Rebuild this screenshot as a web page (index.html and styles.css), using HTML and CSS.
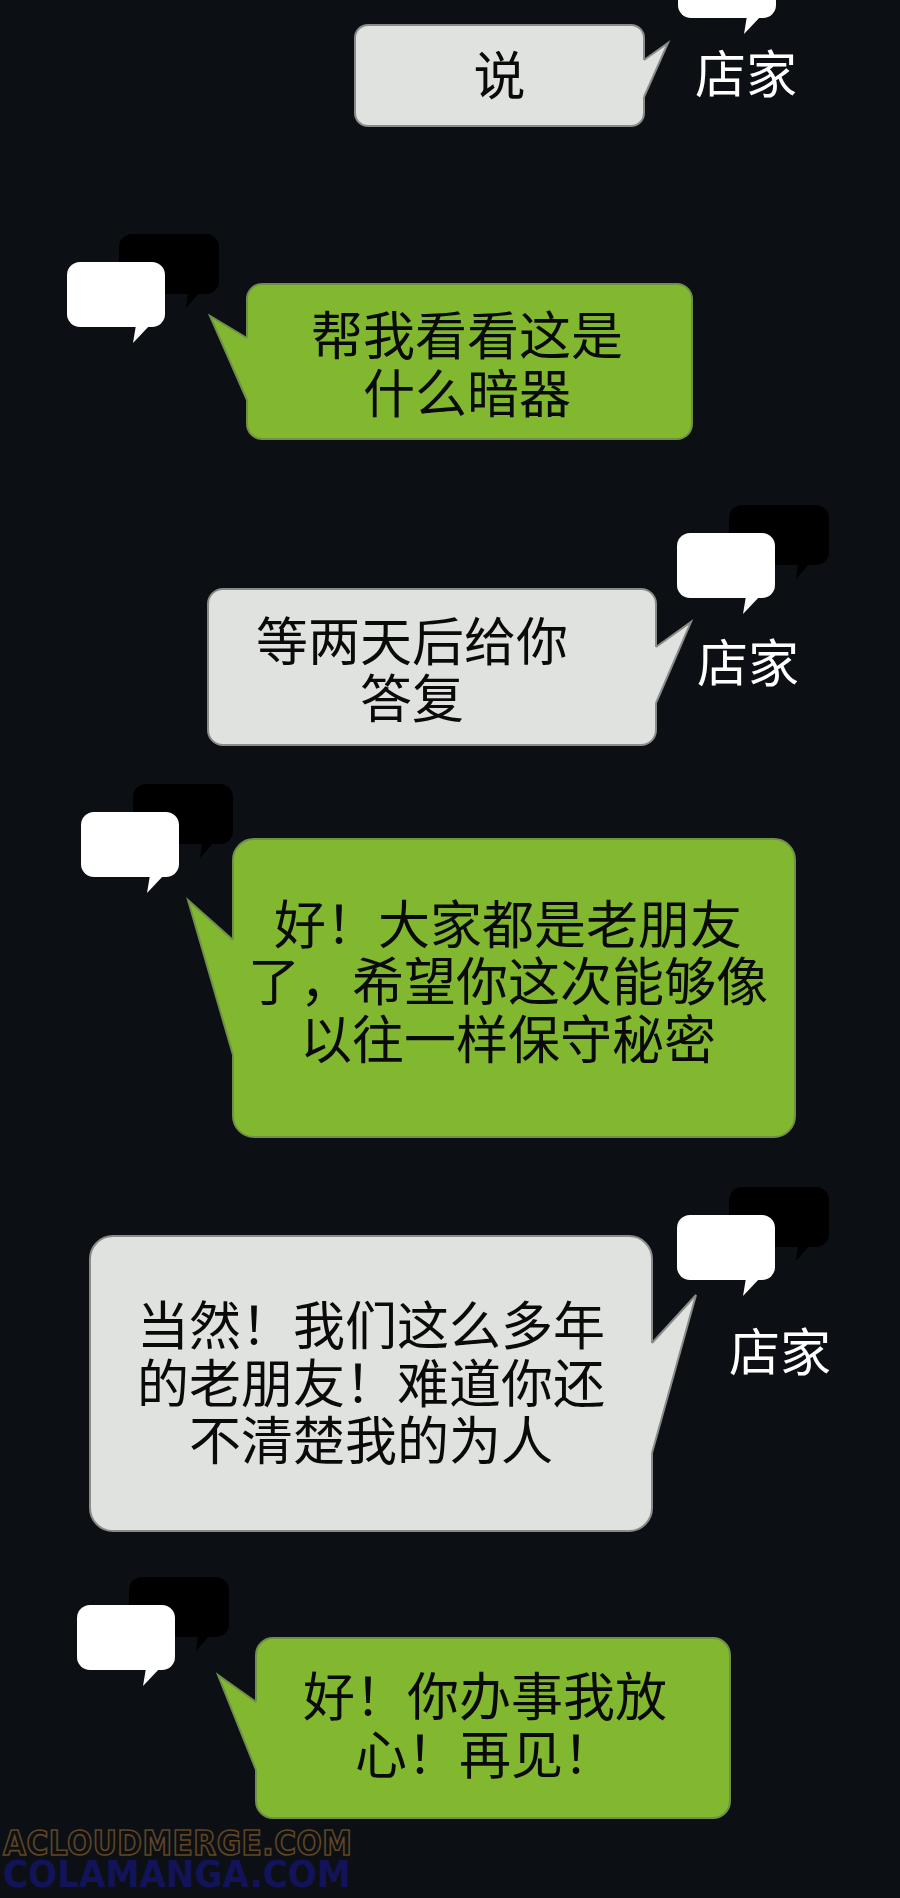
FILE: index.html
```html
<!DOCTYPE html>
<html lang="zh-CN">
<head>
<meta charset="utf-8">
<title>对话</title>
<link rel="stylesheet" href="styles.css">
</head>
<body>
<div class="page">

  <section class="row row-a">
    <div class="bubble gray b-a">
      <span class="txt">说</span>
      <svg class="tail" viewBox="0 0 1 1"><polygon class="f" points="290,36 314,19 290,73 286,73 286,36"/><polyline class="s" points="290,36 314,19 290,73"/></svg>
    </div>
    <div class="speaker sp-a">
      <svg class="avatar" viewBox="0 0 154 111"><rect class="bk" x="53" y="1" width="100" height="60" rx="13"/><polygon class="bk" points="122,59 134,59 120,75"/><rect class="wh" x="1" y="29" width="98" height="65" rx="13"/><polygon class="wh" points="70,92 84,92 67,110"/></svg>
      <div class="name">店家</div>
    </div>
  </section>

  <section class="row row-b">
    <svg class="avatar av-b" viewBox="0 0 154 111"><rect class="bk" x="53" y="1" width="100" height="60" rx="13"/><polygon class="bk" points="122,59 134,59 120,75"/><rect class="wh" x="1" y="29" width="98" height="65" rx="13"/><polygon class="wh" points="70,92 84,92 67,110"/></svg>
    <div class="bubble green b-b">
      <span class="txt">帮我看看这是<br>什么暗器</span>
      <svg class="tail" viewBox="0 0 1 1"><polygon class="f" points="1,55 -36,33 1,117 5,117 5,55"/><polyline class="s" points="1,55 -36,33 1,117"/></svg>
    </div>
  </section>

  <section class="row row-c">
    <div class="bubble gray b-c">
      <span class="txt">等两天后给你<br>答复</span>
      <svg class="tail" viewBox="0 0 1 1"><polygon class="f" points="449,59 484,34 449,115 445,115 445,59"/><polyline class="s" points="449,59 484,34 449,115"/></svg>
    </div>
    <div class="speaker sp-c">
      <svg class="avatar" viewBox="0 0 154 111"><rect class="bk" x="53" y="1" width="100" height="60" rx="13"/><polygon class="bk" points="122,59 134,59 120,75"/><rect class="wh" x="1" y="29" width="98" height="65" rx="13"/><polygon class="wh" points="70,92 84,92 67,110"/></svg>
      <div class="name">店家</div>
    </div>
  </section>

  <section class="row row-d">
    <svg class="avatar av-d" viewBox="0 0 154 111"><rect class="bk" x="53" y="1" width="100" height="60" rx="13"/><polygon class="bk" points="122,59 134,59 120,75"/><rect class="wh" x="1" y="29" width="98" height="65" rx="13"/><polygon class="wh" points="70,92 84,92 67,110"/></svg>
    <div class="bubble green b-d">
      <span class="txt">好！大家都是老朋友<br>了，希望你这次能够像<br>以往一样保守秘密</span>
      <svg class="tail" viewBox="0 0 1 1"><polygon class="f" points="1,102 -44,62 1,217 5,217 5,102"/><polyline class="s" points="1,102 -44,62 1,217"/></svg>
    </div>
  </section>

  <section class="row row-e">
    <div class="bubble gray b-e">
      <span class="txt">当然！我们这么多年<br>的老朋友！难道你还<br>不清楚我的为人</span>
      <svg class="tail" viewBox="0 0 1 1"><polygon class="f" points="563,108 607,60 563,218 559,218 559,108"/><polyline class="s" points="563,108 607,60 563,218"/></svg>
    </div>
    <div class="speaker sp-e">
      <svg class="avatar" viewBox="0 0 154 111"><rect class="bk" x="53" y="1" width="100" height="60" rx="13"/><polygon class="bk" points="122,59 134,59 120,75"/><rect class="wh" x="1" y="29" width="98" height="65" rx="13"/><polygon class="wh" points="70,92 84,92 67,110"/></svg>
      <div class="name">店家</div>
    </div>
  </section>

  <section class="row row-f">
    <svg class="avatar av-f" viewBox="0 0 154 111"><rect class="bk" x="53" y="1" width="100" height="60" rx="13"/><polygon class="bk" points="122,59 134,59 120,75"/><rect class="wh" x="1" y="29" width="98" height="65" rx="13"/><polygon class="wh" points="70,92 84,92 67,110"/></svg>
    <div class="bubble green b-f">
      <span class="txt">好！你办事我放<br>心！再见！</span>
      <svg class="tail" viewBox="0 0 1 1"><polygon class="f" points="1,65 -37,38 1,133 5,133 5,65"/><polyline class="s" points="1,65 -37,38 1,133"/></svg>
    </div>
  </section>

  <footer class="watermark">
    <div class="wm1">ACLOUDMERGE.COM</div>
    <div class="wm2">COLAMANGA.COM</div>
  </footer>

</div>
</body>
</html>
```

FILE: styles.css
```css
html, body {
  margin: 0;
  padding: 0;
  background: #0c1015;
}

.page {
  width: 900px;
  height: 1898px;
  overflow: hidden;
  display: flex;
  flex-direction: column;
  background: #0c1015;
  font-family: "Noto Sans CJK SC", "Noto Sans", sans-serif;
}

.row {
  display: flex;
  align-items: flex-start;
  flex: none;
}

.row-a { height: 220px; }
.row-b { height: 270px; }
.row-c { height: 280px; }
.row-d { height: 400px; }
.row-e { height: 390px; }
.row-f { height: 265px; }

/* speech bubbles */
.bubble {
  position: relative;
  box-sizing: border-box;
  flex: none;
  border: 2px solid;
  display: flex;
  align-items: center;
  justify-content: center;
  text-align: center;
  white-space: nowrap;
  font-size: 52px;
  line-height: 57.5px;
  color: #0a0a0a;
}

.gray {
  background: #e0e2df;
  border-color: #8a8c89;
}

.green {
  background: #82b82f;
  border-color: #708f49;
}

.tail {
  position: absolute;
  left: -2px;
  top: -2px;
  width: 1px;
  height: 1px;
  overflow: visible;
}

.tail .s {
  fill: none;
  stroke-width: 2;
  stroke-linejoin: miter;
}

.gray .tail .f { fill: #e0e2df; }
.gray .tail .s { stroke: #8a8c89; }
.green .tail .f { fill: #82b82f; }
.green .tail .s { stroke: #708f49; }

.b-a {
  width: 291px;
  height: 103px;
  margin-left: 354px;
  margin-top: 24px;
  border-radius: 14px;
  padding-bottom: 6px;
}

.b-b {
  width: 447px;
  height: 157px;
  margin-left: 26px;
  margin-top: 63px;
  border-radius: 16px;
  padding-right: 5px;
}

.b-c {
  width: 450px;
  height: 158px;
  margin-left: 207px;
  margin-top: 98px;
  border-radius: 16px;
  padding-right: 40px;
}

.b-d {
  width: 564px;
  height: 300px;
  margin-left: -2px;
  margin-top: 68px;
  border-radius: 22px;
  padding-right: 12px;
  padding-bottom: 18px;
}

.b-e {
  width: 564px;
  height: 297px;
  margin-left: 89px;
  margin-top: 65px;
  border-radius: 24px;
  padding-bottom: 6px;
}

.b-f {
  width: 476px;
  height: 182px;
  margin-left: 25px;
  margin-top: 77px;
  border-radius: 18px;
  padding-right: 16px;
  padding-bottom: 11px;
}

/* avatar icon: two overlapping speech bubbles */
.avatar {
  display: block;
  flex: none;
  width: 154px;
  height: 111px;
}

.avatar .bk { fill: #000000; }
.avatar .wh { fill: #ffffff; }

.av-b { margin-left: 66px; margin-top: 13px; }
.av-d { margin-left: 80px; margin-top: 13px; }
.av-f { margin-left: 76px; margin-top: 16px; }

/* speaker column on right */
.speaker {
  display: flex;
  flex-direction: column;
  align-items: flex-start;
  flex: none;
}

.name {
  color: #ffffff;
  font-size: 51px;
  line-height: 52px;
  white-space: nowrap;
}

.sp-a { margin-left: 32px; }
.sp-a .avatar { margin-top: -76px; }
.sp-a .name { margin-top: 10px; margin-left: 18px; }

.sp-c { margin-left: 19px; }
.sp-c .avatar { margin-top: 14px; }
.sp-c .name { margin-top: 19px; margin-left: 21px; }

.sp-e { margin-left: 23px; }
.sp-e .avatar { margin-top: 16px; }
.sp-e .name { margin-top: 26px; margin-left: 53px; }

/* watermark */
.watermark {
  flex: none;
  padding-left: 3px;
  padding-top: 5px;
  font-family: "Liberation Sans Narrow", "DejaVu Sans Condensed", "Liberation Sans", sans-serif;
  font-weight: bold;
  white-space: nowrap;
}

.wm1 {
  font-size: 33px;
  line-height: 28px;
  color: transparent;
  -webkit-text-stroke: 1.6px #5e4524;
  letter-spacing: 0.5px;
}

.wm2 {
  margin-top: 1px;
  font-size: 38px;
  line-height: 30px;
  color: #13135a;
}
```
